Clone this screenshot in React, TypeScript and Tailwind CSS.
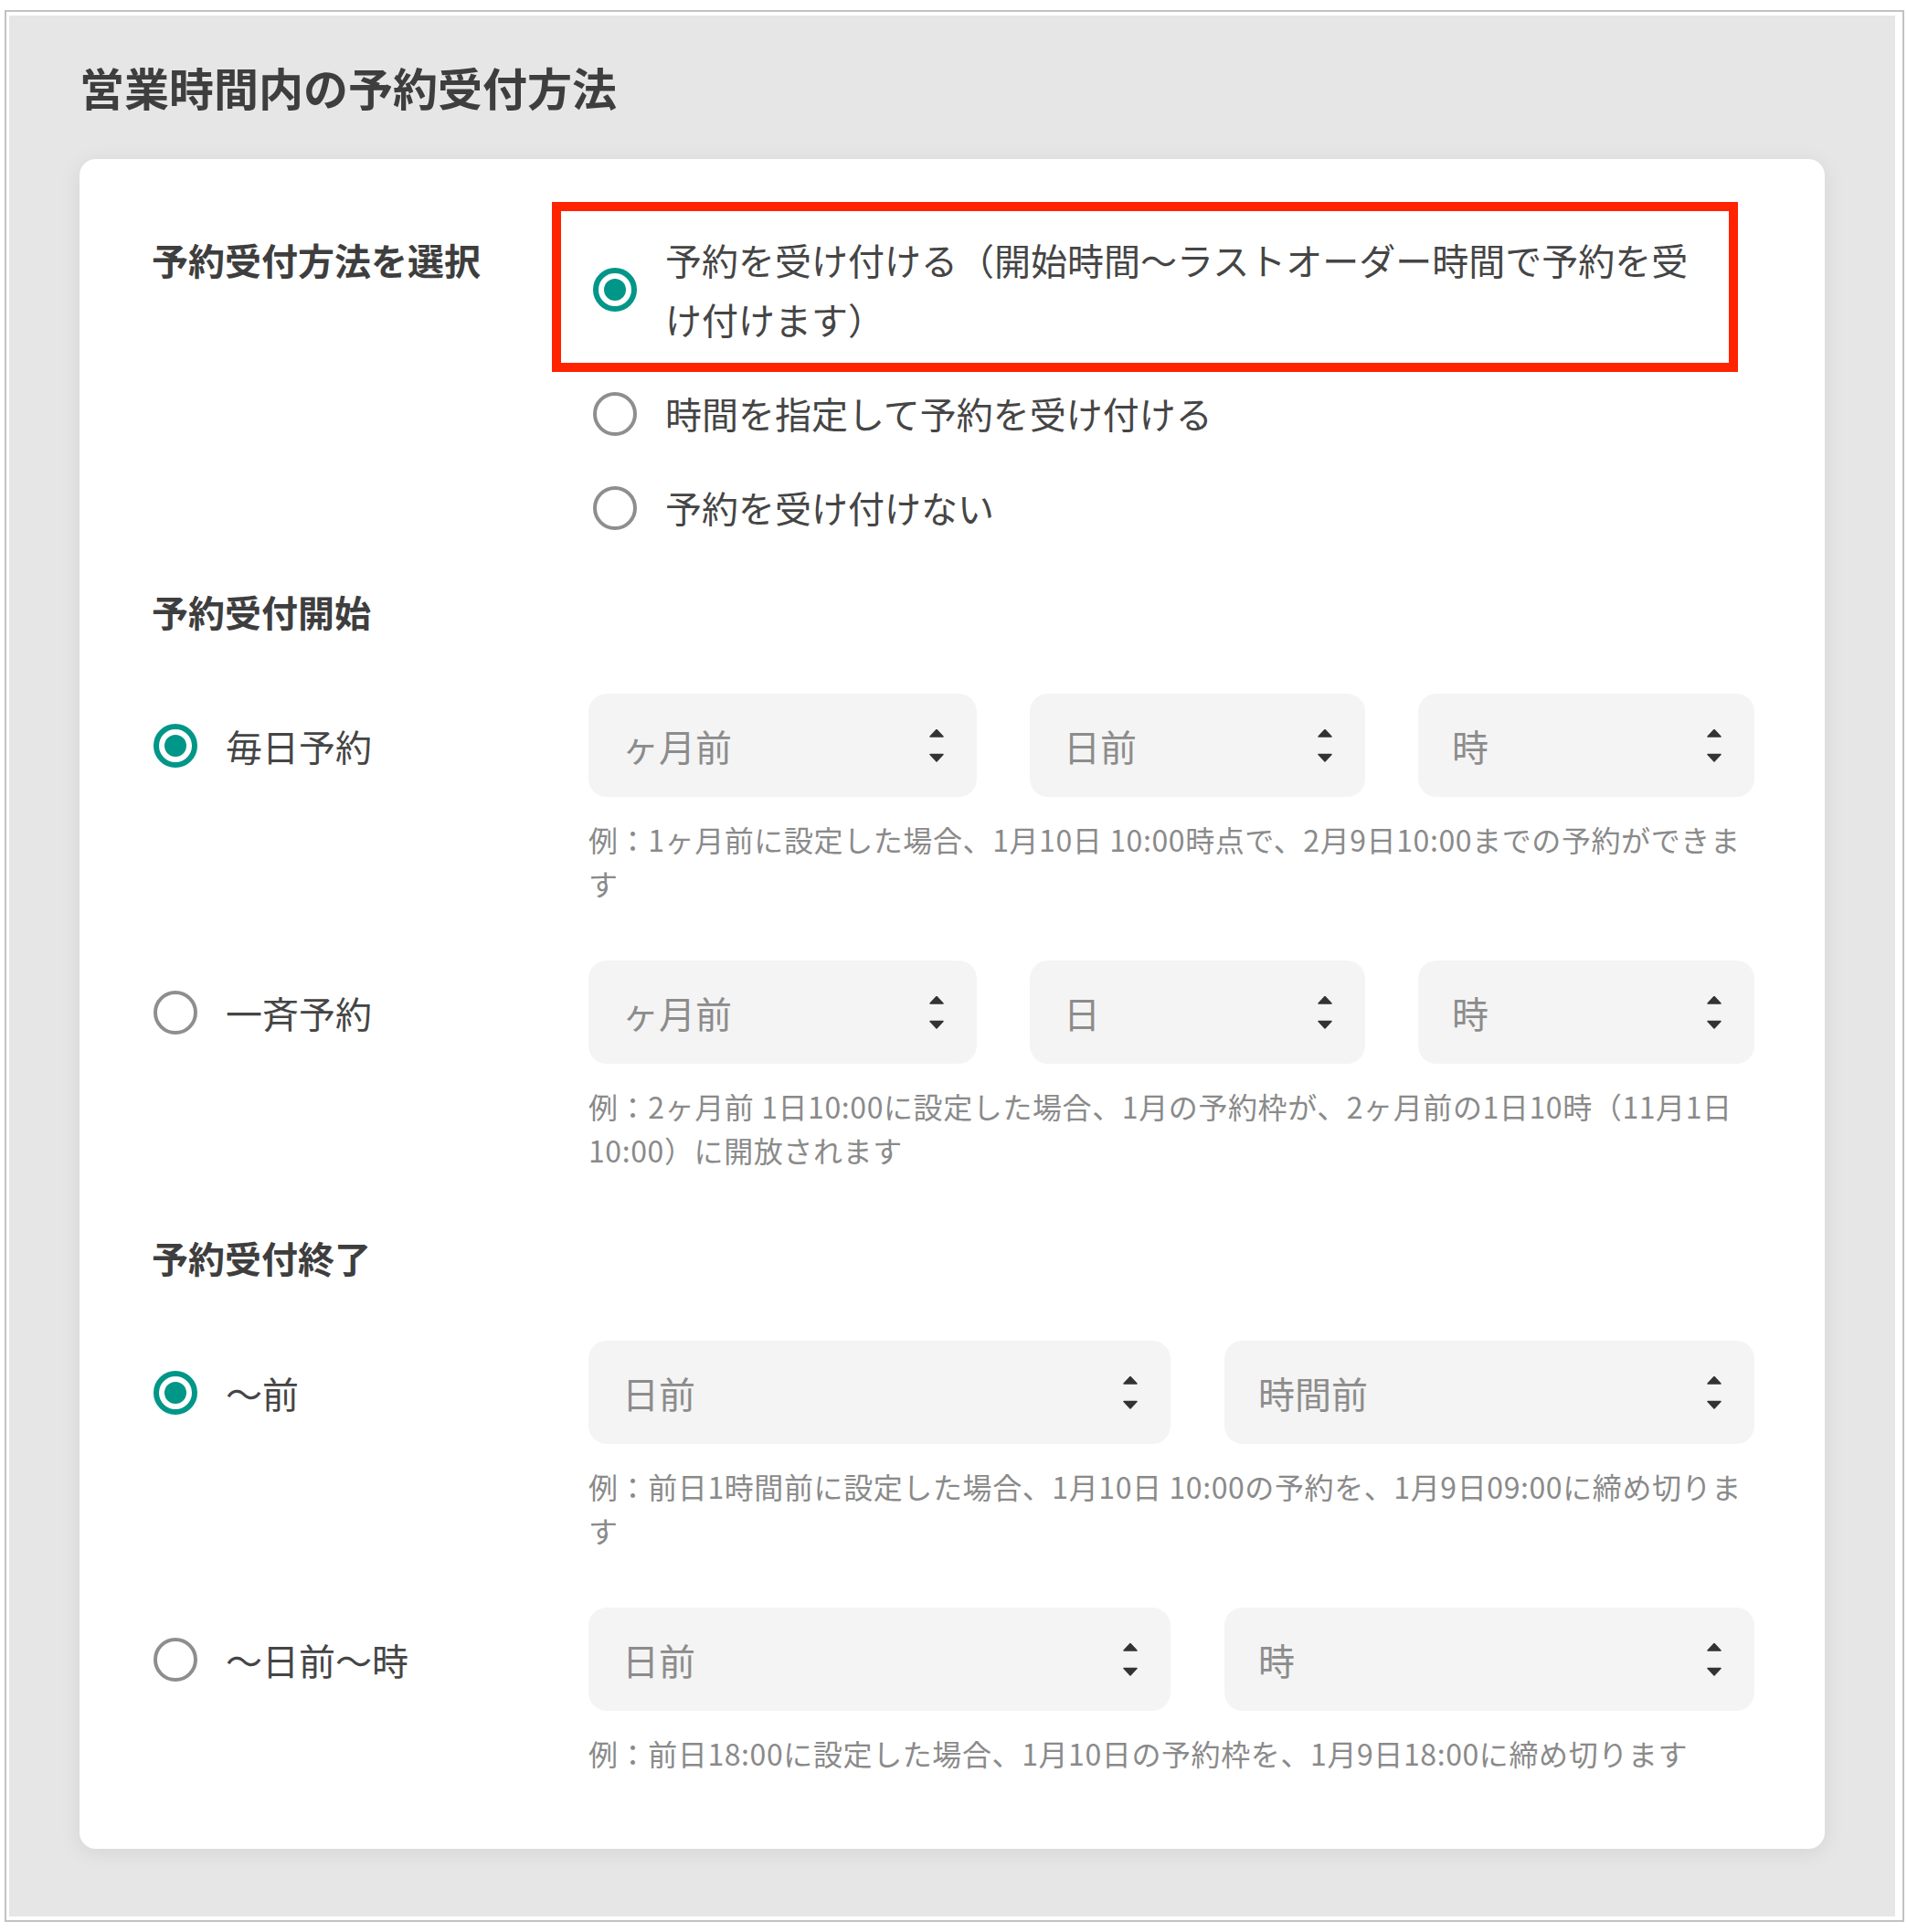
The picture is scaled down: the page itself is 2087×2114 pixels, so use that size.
import React from 'react';

const FONT = "font-['Noto_Sans_CJK_JP','Noto_Sans',sans-serif]";

const Radio: React.FC<{ checked?: boolean }> = ({ checked }) =>
  checked ? (
    <span className="flex h-[48px] w-[48px] shrink-0 items-center justify-center rounded-full border-[6px] border-[#009688]">
      <span className="h-[24px] w-[24px] rounded-full bg-[#009688]" />
    </span>
  ) : (
    <span className="h-[48px] w-[48px] shrink-0 rounded-full border-[4px] border-[#8e8e8e]" />
  );

const Arrows = () => (
  <svg width="16" height="36" viewBox="0 0 16 36" className="shrink-0">
    <path d="M8 0.5 L15 8 L1 8 Z" fill="#333" stroke="#333" strokeWidth="1.5" strokeLinejoin="round" />
    <path d="M1 27.5 L15 27.5 L8 35 Z" fill="#333" stroke="#333" strokeWidth="1.5" strokeLinejoin="round" />
  </svg>
);

const Select: React.FC<{ label: string }> = ({ label }) => (
  <div className="flex h-[113px] items-center justify-between rounded-[20px] bg-[#f4f4f4] pl-[37px] pr-[36px]">
    <span className="text-[40px] leading-none text-[#8c8c8c]">{label}</span>
    <Arrows />
  </div>
);

type RowProps = {
  label: string;
  checked?: boolean;
  selects: string[];
  cols: string;
  help: string;
  className?: string;
};

const Row: React.FC<RowProps> = ({ label, checked, selects, cols, help, className }) => (
  <div className={`grid grid-cols-[478px_1276px] ${className ?? ''}`}>
    <div className="flex h-[113px] items-center gap-[31px] pl-[2px]">
      <Radio checked={checked} />
      <span className="text-[40px] leading-none text-[#454545]">{label}</span>
    </div>
    <div>
      <div className={`grid ${cols}`}>
        {selects.map((s, i) => (
          <Select key={i} label={s} />
        ))}
      </div>
      <p className="mt-[22px] text-[32px] leading-[48px] tracking-[0.6px] text-[#8a8a8a]">{help}</p>
    </div>
  </div>
);

const THREE = 'grid-cols-[425px_367px_368px] gap-[58px]';
const TWO = 'grid-cols-[637px_580px] gap-[59px]';

export default function App() {
  return (
    <div className={`${FONT} min-h-screen bg-white`}>
      <div className="ml-[5px] mt-[11px] h-[2092px] w-[2079px] border-2 border-[#c2c2c2] pb-[4px] pl-[3px] pr-[8px] pt-[4px]">
        <div className="h-full bg-[#e6e6e6] px-[77px] pt-[42px]">
          <h1 className="text-[49px] font-bold leading-[72px] text-[#3e3e3e]">営業時間内の予約受付方法</h1>

          <div className="mt-[43px] rounded-[18px] bg-white pb-[81px] pl-[79px] pr-[76px] pt-[78px] shadow-[0_4px_24px_rgba(0,0,0,0.08)]">
            {/* 受付方法 */}
            <div className="grid grid-cols-[478px_1276px]">
              <div className="text-[40px] font-bold leading-[65px] text-[#3e3e3e]">予約受付方法を選択</div>
              <div className="ml-[5px] flex flex-col gap-[38px]">
                <div className="relative flex items-center gap-[31px]">
                  <div className="pointer-events-none absolute -left-[45px] -top-[31px] -bottom-[25px] right-[18px] border-[10px] border-[#ff2300]" />
                  <Radio checked />
                  <span className="max-w-[1150px] text-[40px] leading-[65px] text-[#454545]">
                    予約を受け付ける（開始時間〜ラストオーダー時間で予約を受け付けます）
                  </span>
                </div>
                <div className="flex items-center gap-[31px]">
                  <Radio />
                  <span className="text-[40px] leading-[65px] text-[#454545]">時間を指定して予約を受け付ける</span>
                </div>
                <div className="flex items-center gap-[31px]">
                  <Radio />
                  <span className="text-[40px] leading-[65px] text-[#454545]">予約を受け付けない</span>
                </div>
              </div>
            </div>

            {/* 開始 */}
            <h2 className="mt-[51px] text-[40px] font-bold leading-[60px] text-[#3e3e3e]">予約受付開始</h2>
            <Row
              className="mt-[60px]"
              label="毎日予約"
              checked
              selects={['ヶ月前', '日前', '時']}
              cols={THREE}
              help="例：1ヶ月前に設定した場合、1月10日 10:00時点で、2月9日10:00までの予約ができます"
            />
            <Row
              className="mt-[61px]"
              label="一斉予約"
              selects={['ヶ月前', '日', '時']}
              cols={THREE}
              help="例：2ヶ月前 1日10:00に設定した場合、1月の予約枠が、2ヶ月前の1日10時（11月1日10:00）に開放されます"
            />

            {/* 終了 */}
            <h2 className="mt-[64px] text-[40px] font-bold leading-[60px] text-[#3e3e3e]">予約受付終了</h2>
            <Row
              className="mt-[61px]"
              label="〜前"
              checked
              selects={['日前', '時間前']}
              cols={TWO}
              help="例：前日1時間前に設定した場合、1月10日 10:00の予約を、1月9日09:00に締め切ります"
            />
            <Row
              className="mt-[61px]"
              label="〜日前〜時"
              selects={['日前', '時']}
              cols={TWO}
              help="例：前日18:00に設定した場合、1月10日の予約枠を、1月9日18:00に締め切ります"
            />
          </div>
        </div>
      </div>
    </div>
  );
}
